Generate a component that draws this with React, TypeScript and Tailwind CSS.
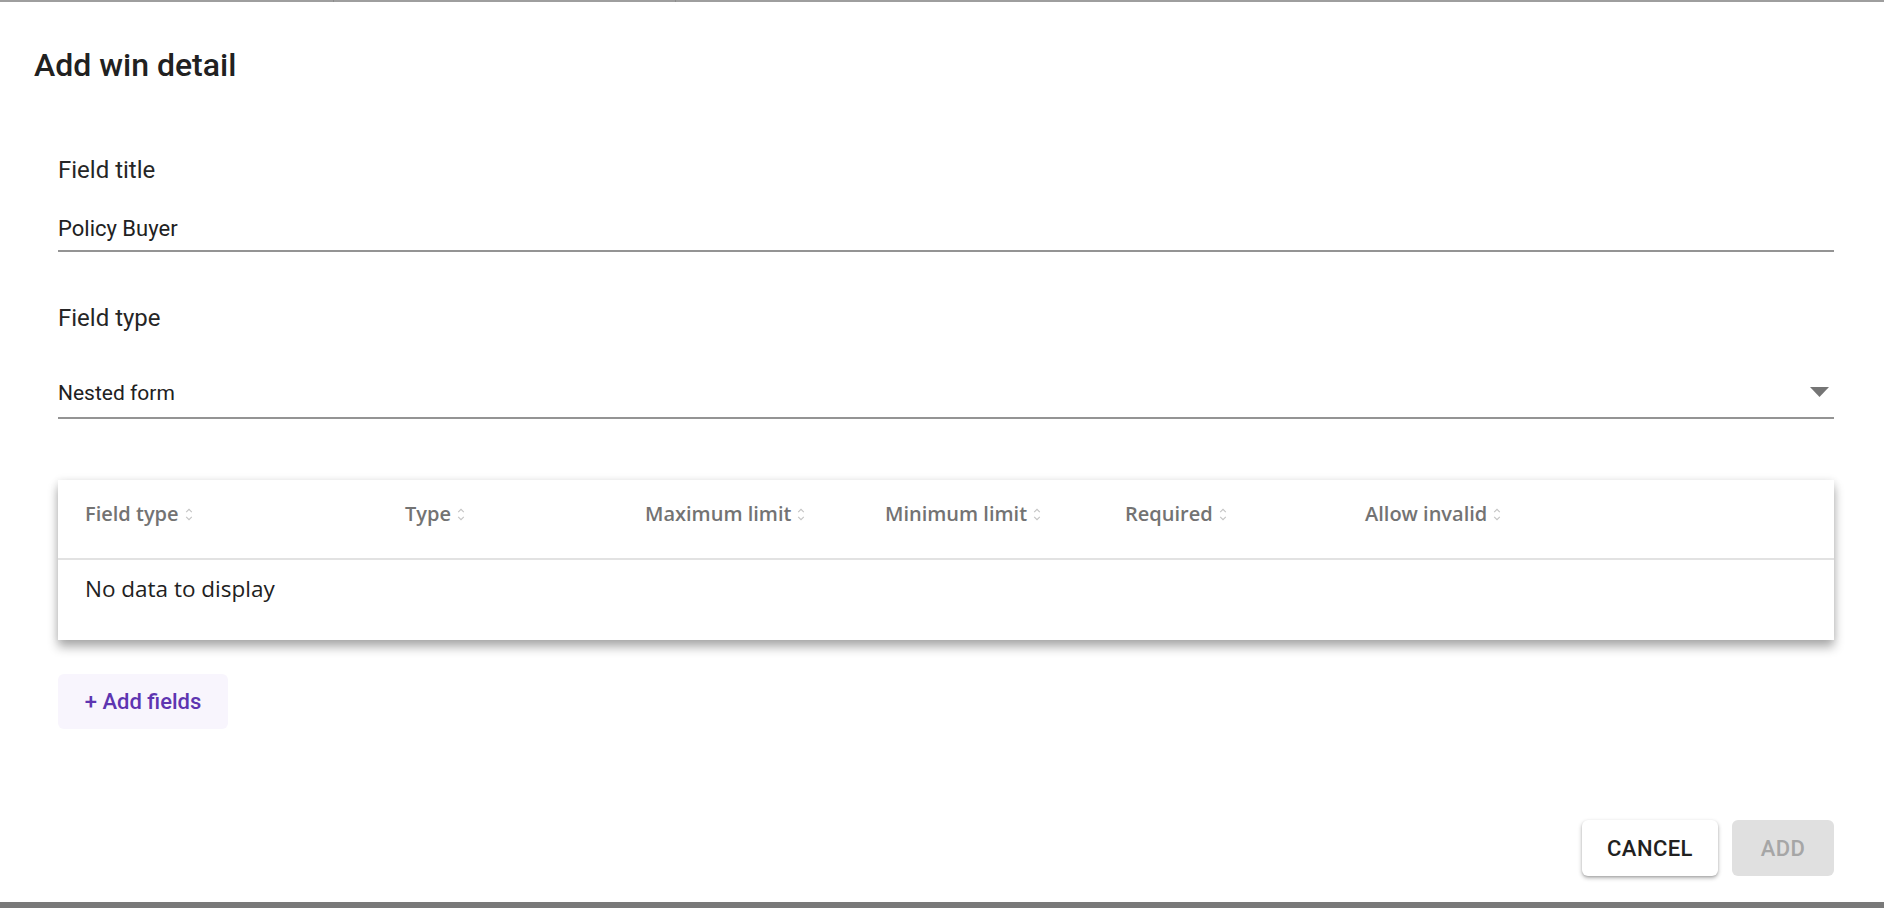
import React from "react";

const columns = [
  { label: "Field type", width: "w-[320px]" },
  { label: "Type", width: "w-[240px]" },
  { label: "Maximum limit", width: "w-[240px]" },
  { label: "Minimum limit", width: "w-[240px]" },
  { label: "Required", width: "w-[240px]" },
  { label: "Allow invalid", width: "w-[240px]" },
];

function SortIcon() {
  return (
    <svg className="ml-[6px] h-[13px] w-[8px] shrink-0" viewBox="0 0 8 13" fill="none" stroke="#c4c4c4" strokeWidth={1.1}>
      <path d="M1.2 4.2L4 1.4l2.8 2.8" />
      <path d="M1.2 8.8L4 11.6l2.8-2.8" />
    </svg>
  );
}

export default function App() {
  return (
    <div className="flex h-[908px] w-full flex-col bg-[#797979]" style={{ fontFamily: "Roboto, 'Liberation Sans', sans-serif" }}>
      {/* backdrop peeking above the dialog */}
      <div className="relative h-[2px] shrink-0 overflow-hidden bg-[#9e9e9e]">
        <div className="absolute left-[333px] top-0 h-full w-px bg-[#8c8c8c]" />
        <div className="absolute left-[675px] top-0 h-full w-px bg-[#8c8c8c]" />
        <span className="absolute left-[1307px] top-[-16px] text-[20px] leading-[18px] text-[#222]">Validation</span>
      </div>

      {/* Dialog */}
      <div className="flex h-[900px] shrink-0 flex-col bg-white">
        <h2 className="px-[34px] pt-[39px] text-[32px] font-medium leading-[48px] text-[#212121]">Add win detail</h2>

        <div className="flex flex-col pl-[58px] pr-[50px]">
          {/* Field title */}
          <label className="mt-[63px] text-[24px] leading-[36px] text-[#262626]">Field title</label>
          <div className="mt-[25px] h-[39px] border-b-2 border-[#949494] pb-[5px] text-[22px] leading-[32px] text-[#212121]">
            Policy Buyer
          </div>

          {/* Field type */}
          <label className="mt-[48px] text-[24px] leading-[36px] text-[#262626]">Field type</label>
          <div className="mt-[41px] flex h-[42px] items-start justify-between border-b-2 border-[#949494] pb-[8px]">
            <span className="text-[21px] leading-[32px] text-[#212121]">Nested form</span>
            <svg className="mr-[5px] mt-[10px] h-[10px] w-[19px]" viewBox="0 0 19 10">
              <path d="M0 0h19L9.5 10z" fill="#757575" />
            </svg>
          </div>

          {/* Nested fields table */}
          <div
            className="mt-[61px] bg-white shadow-[0_7px_10px_rgba(0,0,0,0.32),0_0_8px_rgba(0,0,0,0.08)]"
            style={{ fontFamily: "'Open Sans', 'Noto Sans', sans-serif" }}
          >
            <div className="flex h-[80px] border-b-2 border-[#e2e2e2] pl-[27px] pt-[20px]">
              {columns.map((c) => (
                <div key={c.label} className={`${c.width} flex h-[28px] items-center`}>
                  <span className="text-[20px] font-semibold leading-[28px] text-[#737373]">{c.label}</span>
                  <SortIcon />
                </div>
              ))}
            </div>
            <div className="h-[80px] pl-[27px] pt-[14px] text-[22.5px] leading-[30px] text-[#212121]">No data to display</div>
          </div>

          <button className="mt-[34px] flex h-[55px] w-[170px] items-center justify-center rounded-[6px] bg-[#f8f5fd] text-[22px] font-medium text-[#5e35b1]">
            + Add fields
          </button>

          {/* Actions */}
          <div className="mt-[91px] flex justify-end gap-[14px]">
            <button className="h-[56px] w-[136px] rounded-[6px] bg-white text-[22px] font-medium tracking-[0.02em] text-[#212121] shadow-[0_2px_4px_rgba(0,0,0,0.3),0_1px_2px_rgba(0,0,0,0.12)]">
              CANCEL
            </button>
            <button className="h-[56px] w-[102px] rounded-[6px] bg-[#e0e0e0] text-[22px] font-medium tracking-[0.02em] text-[#a6a6a6]">
              ADD
            </button>
          </div>
        </div>
      </div>
    </div>
  );
}
